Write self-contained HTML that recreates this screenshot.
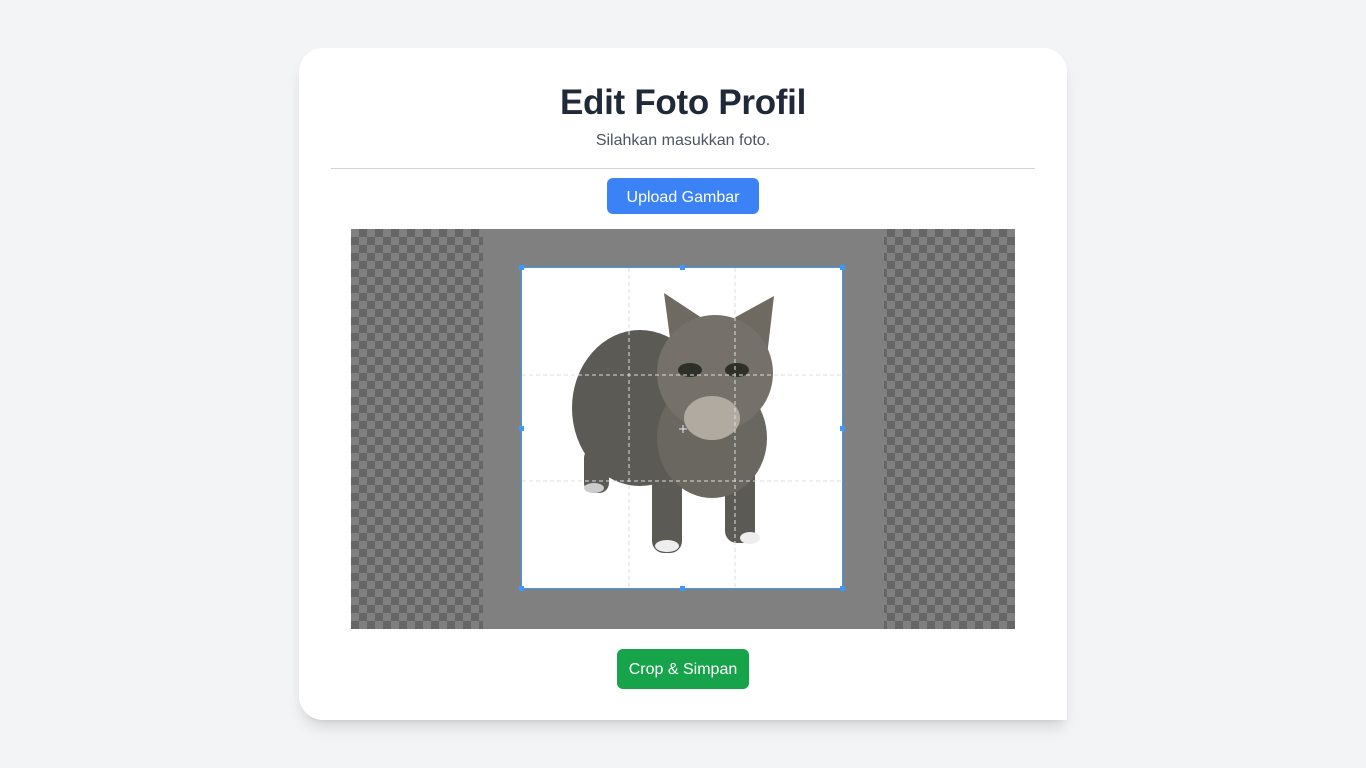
<!DOCTYPE html>
<html><head><meta charset="utf-8"><style>
body{margin:0;background:#f3f4f6;font-family:"Liberation Sans",sans-serif;width:1366px;height:768px;overflow:hidden;position:relative}
.card{position:absolute;left:299px;top:48px;width:768px;height:672px;background:#fff;border-radius:24px 24px 0 24px;box-shadow:0 10px 15px -3px rgba(0,0,0,.12),0 4px 6px -4px rgba(0,0,0,.1)}
h1{position:absolute;left:0;right:0;top:81px;margin:0;text-align:center;font-size:35px;font-weight:bold;color:#1f2937;line-height:44px;letter-spacing:-0.3px}
.sub{position:absolute;left:0;right:0;top:131px;text-align:center;font-size:16px;color:#4b5563;line-height:20px}
.hr{position:absolute;left:331px;width:704px;top:168px;height:1px;background:#d1d5db}
.btn{position:absolute;color:#fff;font-size:16px;text-align:center;border-radius:6px}
.crop{position:absolute;left:351px;top:229px;width:664px;height:400px;background-color:#808080;background-image:linear-gradient(45deg,#666 25%,transparent 25%,transparent 75%,#666 75%),linear-gradient(45deg,#666 25%,transparent 25%,transparent 75%,#666 75%);background-size:16px 16px;background-position:0 0,8px 8px}
.mid{position:absolute;left:132px;top:0;width:401px;height:400px;background:#808080}
.box{position:absolute;left:171px;top:39px;width:320px;height:320px;background:#fff;outline:1px solid #3b99fc}
.h{position:absolute;width:5px;height:5px;background:#3b99fc}
</style></head><body>
<div class="card"></div>
<h1>Edit Foto Profil</h1>
<div class="sub">Silahkan masukkan foto.</div>
<div class="hr"></div>
<div class="btn" style="left:607px;top:178px;width:152px;height:36px;line-height:39px;background:#3b82f6">Upload Gambar</div>
<div class="crop"><div class="mid"></div>
<div class="box">
<svg width="320" height="320" viewBox="0 0 320 320">
<g fill="#5b5a55">
<ellipse cx="118" cy="140" rx="68" ry="78"/>
<rect x="62" y="180" width="25" height="45" rx="10"/>
<rect x="130" y="200" width="30" height="85" rx="12"/>
<rect x="203" y="195" width="30" height="80" rx="12"/>
<ellipse cx="190" cy="170" rx="55" ry="60" fill="#6a6760"/>
<path d="M142 25 L180 50 L150 85 Z" fill="#6e6a62"/>
<path d="M252 28 L212 50 L245 88 Z" fill="#6e6a62"/>
<ellipse cx="193" cy="105" rx="58" ry="58" fill="#75716a"/>
</g>
<ellipse cx="190" cy="150" rx="28" ry="22" fill="#b0aaa0"/>
<ellipse cx="168" cy="102" rx="12" ry="7" fill="#2e2f28"/>
<ellipse cx="215" cy="102" rx="12" ry="7" fill="#2e2f28"/>
<ellipse cx="145" cy="278" rx="12" ry="6" fill="#eee"/>
<ellipse cx="228" cy="270" rx="10" ry="6" fill="#eee"/>
<ellipse cx="72" cy="220" rx="10" ry="5" fill="#ccc"/>
<g stroke="#ddd" stroke-dasharray="4 3" stroke-width="1">
<line x1="107" y1="0" x2="107" y2="320"/><line x1="213" y1="0" x2="213" y2="320"/>
<line x1="0" y1="107" x2="320" y2="107"/><line x1="0" y1="213" x2="320" y2="213"/>
</g>
<g stroke="#eee"><line x1="157" y1="161" x2="165" y2="161"/><line x1="161" y1="157" x2="161" y2="165"/></g>
</svg>
<div class="h" style="left:-3px;top:-3px"></div><div class="h" style="left:158px;top:-3px"></div><div class="h" style="right:-3px;top:-3px"></div>
<div class="h" style="left:-3px;top:158px"></div><div class="h" style="right:-3px;top:158px"></div>
<div class="h" style="left:-3px;bottom:-3px"></div><div class="h" style="left:158px;bottom:-3px"></div><div class="h" style="right:-3px;bottom:-3px"></div>
</div></div>
<div class="btn" style="left:617px;top:649px;width:132px;height:40px;line-height:42px;background:#16a34a">Crop &amp; Simpan</div>
</body></html>
